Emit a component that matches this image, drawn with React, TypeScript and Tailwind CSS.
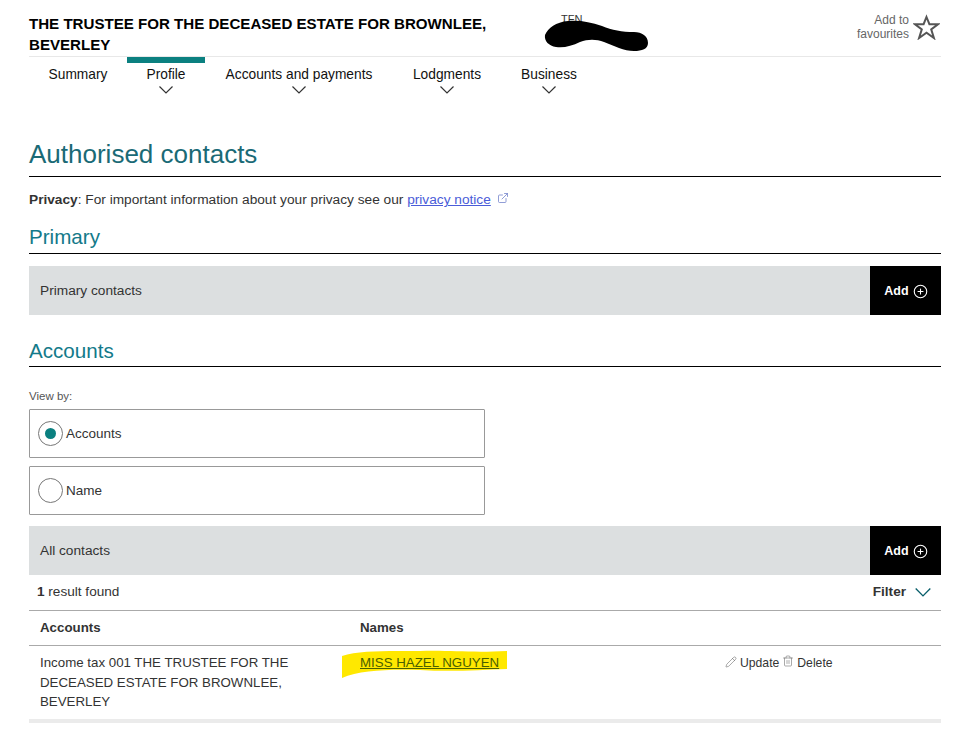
import { Pencil, Trash2, ExternalLink, CirclePlus } from 'lucide-react';

const navItems = [
  { label: 'Summary', width: 'w-[98px]', menu: false, active: false },
  { label: 'Profile', width: 'w-[78px]', menu: true, active: true },
  { label: 'Accounts and payments', width: 'w-[188px]', menu: true, active: false },
  { label: 'Lodgments', width: 'w-[108px]', menu: true, active: false },
  { label: 'Business', width: 'w-[96px]', menu: true, active: false },
];

function Chevron({ className }: { className: string }) {
  return (
    <svg className={className} viewBox="0 0 14 8" fill="none" stroke="currentColor" strokeWidth="1.2">
      <path d="M0.5 0.5 L7 7 L13.5 0.5" />
    </svg>
  );
}

function NavItem({ label, width, menu, active }: { label: string; width: string; menu: boolean; active: boolean }) {
  return (
    <div className={`flex flex-col items-center ${width}`}>
      <div className={`h-[6px] w-full ${active ? 'bg-[#0b8080]' : ''}`} />
      <span className="mt-[3px] text-[13.75px] leading-[17px] text-[#111]">{label}</span>
      {menu && <Chevron className="mt-[3px] h-[8px] w-[14px] text-[#333]" />}
    </div>
  );
}

function AddBar({ label }: { label: string }) {
  return (
    <div className="flex h-[49px] items-stretch justify-between bg-[#dcdfe0]">
      <span className="self-center pl-[11px] pt-[1px] text-[13.7px] text-[#333]">{label}</span>
      <button className="flex w-[71px] items-center justify-center gap-[4px] bg-black pl-[1px] pt-[2px] text-[12.5px] font-bold text-white">
        Add
        <CirclePlus className="h-[15px] w-[15px]" strokeWidth={1.75} />
      </button>
    </div>
  );
}

function RadioBox({ label, checked }: { label: string; checked: boolean }) {
  return (
    <div className="flex h-[49px] items-center gap-[3px] rounded-[1px] border border-[#999] pl-[8px]">
      <span className="flex h-[25px] w-[25px] items-center justify-center rounded-full border border-[#777]">
        {checked && <span className="h-[11px] w-[11px] rounded-full bg-[#0b8080]" />}
      </span>
      <span className="pt-[1px] text-[13.5px] text-[#333]">{label}</span>
    </div>
  );
}

export default function App() {
  return (
    <div className="relative min-h-[734px] bg-white pl-[29px] pr-[32px] font-['Liberation_Sans',Arial,sans-serif]">
      <header className="flex h-[57px] items-start justify-between border-b border-[#e8e8e8]">
        <h1 className="mt-[13px] w-[480px] text-[15.1px] font-bold leading-[21px] text-black">
          THE TRUSTEE FOR THE DECEASED ESTATE FOR BROWNLEE, BEVERLEY
        </h1>
        <span className="absolute left-[561px] top-[11px] text-[11px] text-[#333]">TFN</span>
        <svg className="absolute left-[544px] top-[19px]" width="106" height="34" viewBox="0 0 106 34">
          <path
            d="M1 16 C4 9 12 3 24 2 C36 1 46 3 58 7 C68 11 78 13 90 13 C98 13 104 17 104 24 C104 30 98 32 90 32 C80 32 70 27 60 23 C52 20 44 20 36 23 C28 27 20 29 12 28 C5 27 0 22 1 16 Z"
            fill="#000"
          />
        </svg>
        <div className="mr-[1px] mt-[13px] flex items-center gap-[4px]">
          <span className="text-right text-[12px] leading-[14px] text-[#666]">
            Add to
            <br />
            favourites
          </span>
          <svg width="27" height="26" viewBox="0 0 27 26" fill="none" stroke="#555" strokeWidth="2">
            <path d="M13.5 3 L16.4 10.2 L25 10.2 L18.2 15.4 L20.9 24 L13.5 18.8 L6.1 24 L8.8 15.4 L2 10.2 L10.6 10.2 Z" />
          </svg>
        </div>
      </header>

      <nav className="flex h-[71px] items-start">
        {navItems.map((item) => (
          <NavItem key={item.label} {...item} />
        ))}
      </nav>

      <section>
        <h2 className="mt-[9px] border-b border-black pb-[5px] text-[26px] leading-[34px] text-[#1a6a76]">Authorised contacts</h2>
        <p className="mt-[14px] text-[13.7px] leading-[17px] text-[#333]">
          <b>Privacy</b>: For important information about your privacy see our{' '}
          <a className="text-[#4a5cd8] underline">privacy notice</a>
          <ExternalLink className="ml-[6px] inline h-[12px] w-[12px] align-baseline text-[#6c7cc8]" strokeWidth={1.5} />
        </p>
      </section>

      <section className="mt-[16px]">
        <h3 className="border-b border-black pb-[3px] text-[20.6px] leading-[26px] text-[#137a8a]">Primary</h3>
        <div className="mt-[12px]">
          <AddBar label="Primary contacts" />
        </div>
      </section>

      <section className="mt-[22px]">
        <h3 className="border-b border-black pb-[1px] text-[20.6px] leading-[28px] text-[#137a8a]">Accounts</h3>
        <div className="mt-[22px] text-[11.5px] leading-[14px] text-[#555]">View by:</div>
        <div className="mt-[6px] flex w-[456px] flex-col gap-[8px]">
          <RadioBox label="Accounts" checked />
          <RadioBox label="Name" checked={false} />
        </div>
        <div className="mt-[11px]">
          <AddBar label="All contacts" />
        </div>
      </section>

      <div className="flex h-[36px] items-center justify-between border-b border-[#aaa] pl-[8px] pr-[10px] text-[13.6px] text-[#333]">
        <span>
          <b>1</b> result found
        </span>
        <span className="flex items-center gap-[9px] font-bold">
          Filter
          <Chevron className="h-[9px] w-[16px] text-[#0a5f6b]" />
        </span>
      </div>

      <div className="grid grid-cols-[331px_365px_1fr] border-b-[4px] border-[#ebebeb] text-[13.3px] text-[#333]">
        <div className="flex h-[35px] items-center border-b border-[#aaa] pl-[11px] font-bold">Accounts</div>
        <div className="col-span-2 flex h-[35px] items-center border-b border-[#aaa] font-bold">Names</div>
        <div className="pb-[7px] pl-[11px] pr-[40px] pt-[7px] leading-[19.5px]">
          Income tax 001 THE TRUSTEE FOR THE DECEASED ESTATE FOR BROWNLEE, BEVERLEY
        </div>
        <div className="relative pt-[7px] leading-[19.5px]">
          <svg className="absolute -left-[20px] top-[2px]" width="168" height="30" viewBox="0 0 168 30">
            <path d="M2 8 C20 2 50 3 80 3 C110 2 130 5 167 3 L167 21 C140 22 110 24 80 22 C50 21 20 22 2 30 Z" fill="#ffe800" />
          </svg>
          <a className="relative text-[#4a6000] underline">MISS HAZEL NGUYEN</a>
        </div>
        <div className="flex items-start gap-[3px] pt-[10px] text-[12.2px] leading-[14px]">
          <Pencil className="h-[12px] w-[12px] text-[#555]" strokeWidth={1} />
          <span>Update</span>
          <Trash2 className="-mt-[2px] h-[14px] w-[12px] text-[#555]" strokeWidth={1} />
          <span>Delete</span>
        </div>
      </div>
    </div>
  );
}
